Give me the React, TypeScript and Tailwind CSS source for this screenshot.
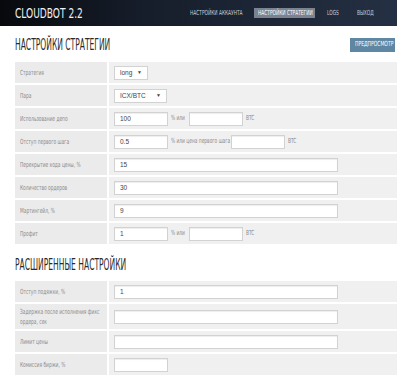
import React from "react"

const cond = "font-['DejaVu_Sans_Condensed','Open_Sans',sans-serif] font-stretch-condensed"

// narrow text: the reference uses a very condensed face, squeeze it horizontally
function N({ k, children }: { k: string; children: React.ReactNode }) {
  return <span className={`inline-block origin-left whitespace-nowrap ${k}`}>{children}</span>
}

function Input({ w = "w-[224px]", value = "" }: { w?: string; value?: string }) {
  return (
    <div
      className={`${w} shrink-0 h-[14px] bg-white border border-[#d2d2d2] shadow-[inset_0_1px_1px_rgba(0,0,0,0.07)] flex items-center px-[5px] text-[6.5px] text-[#444] font-['Liberation_Sans',sans-serif]`}
    >
      {value}
    </div>
  )
}

function Select({ w, value }: { w: string; value: string }) {
  return (
    <div
      className={`${w} shrink-0 h-[14px] bg-white border border-[#d2d2d2] flex items-center justify-between pl-[5px] pr-[5px] text-[6.5px] text-[#444] font-['Liberation_Sans',sans-serif]`}
    >
      <span>{value}</span>
      <span className="text-[5px]">▼</span>
    </div>
  )
}

function Unit({ w, children }: { w: string; children: React.ReactNode }) {
  return (
    <div className={`${w} shrink-0 pl-[3px] ${cond} text-[7px] text-[#8a8a8a]`}>
      <N k="scale-x-[0.69]">{children}</N>
    </div>
  )
}

function Row({ label, h = "h-[23px]", children }: { label: React.ReactNode; h?: string; children?: React.ReactNode }) {
  return (
    <div className={`flex ${h} border-b-2 border-white`}>
      <div className={`w-[94px] shrink-0 bg-[#ebebeb] border-r-2 border-white flex items-center px-[5px] ${cond} text-[7px] leading-[10px] text-[#8a8a8a]`}>
        {label}
      </div>
      <div className="flex-1 bg-[#f0f0f0] flex items-center pl-[5px]">{children}</div>
    </div>
  )
}

function Label({ children }: { children: React.ReactNode }) {
  return <N k="scale-x-[0.69]">{children}</N>
}

function Heading({ children }: { children: React.ReactNode }) {
  return (
    <h2 className={`${cond} text-[15px] leading-[20px] text-[#2a2a2a] uppercase`}>
      <N k="scale-x-[0.56]">{children}</N>
    </h2>
  )
}

export default function App() {
  return (
    <div className="w-[397px] h-[375px] overflow-hidden bg-white">
      <header className="h-[26px] flex items-center justify-between pl-[15px] pr-[23px] bg-[linear-gradient(90deg,#07090d_0%,#161d2a_35%,#243043_100%)]">
        <div className={`${cond} text-[14px] text-[#eef0f3]`}>
          <N k="scale-x-[0.72]">CLOUDBOT 2.2</N>
        </div>
        <nav className={`flex items-center ${cond} text-[7px] text-[#c9ced8]`}>
          <div className="w-[52px]">
            <N k="scale-x-[0.69]">НАСТРОЙКИ АККАУНТА</N>
          </div>
          <div className="w-[61px] h-[10px] ml-[12px] bg-[#7b8391] text-white flex items-center pl-[4px]">
            <N k="scale-x-[0.69]">НАСТРОЙКИ СТРАТЕГИИ</N>
          </div>
          <div className="w-[14px] ml-[12px]">
            <N k="scale-x-[0.69]">LOGS</N>
          </div>
          <div className="w-[17px] ml-[16px]">
            <N k="scale-x-[0.69]">ВЫХОД</N>
          </div>
        </nav>
      </header>

      <div className="pl-[15px]">
        <div className="flex items-center justify-between h-[36px] pt-[1px]">
          <Heading>Настройки стратегии</Heading>
          <button className={`w-[45px] h-[14px] bg-[#5f87a3] text-white ${cond} text-[7px] flex items-center pl-[5px] mr-[2px]`}>
            <N k="scale-x-[0.72]">ПРЕДПРОСМОТР</N>
          </button>
        </div>

        <div>
          <Row label={<Label>Стратегия</Label>}>
            <Select w="w-[34px]" value="long" />
          </Row>
          <Row label={<Label>Пара</Label>}>
            <Select w="w-[53px]" value="ICX/BTC" />
          </Row>
          <Row label={<Label>Использование депо</Label>}>
            <Input w="w-[54px]" value="100" />
            <Unit w="w-[21px]">% или</Unit>
            <Input w="w-[54px]" />
            <Unit w="w-[20px]">BTC</Unit>
          </Row>
          <Row label={<Label>Отступ первого шага</Label>}>
            <Input w="w-[54px]" value="0.5" />
            <Unit w="w-[63px]">% или цена первого шага</Unit>
            <Input w="w-[54px]" />
            <Unit w="w-[20px]">BTC</Unit>
          </Row>
          <Row label={<Label>Перекрытие хода цены, %</Label>}>
            <Input value="15" />
          </Row>
          <Row label={<Label>Количество ордеров</Label>}>
            <Input value="30" />
          </Row>
          <Row label={<Label>Мартингейл, %</Label>}>
            <Input value="9" />
          </Row>
          <Row label={<Label>Профит</Label>}>
            <Input w="w-[54px]" value="1" />
            <Unit w="w-[21px]">% или</Unit>
            <Input w="w-[54px]" />
            <Unit w="w-[20px]">BTC</Unit>
          </Row>
        </div>

        <div className="h-[35px] flex items-center pt-[3px]">
          <Heading>Расширенные настройки</Heading>
        </div>

        <div>
          <Row label={<Label>Отступ подяжки, %</Label>}>
            <Input value="1" />
          </Row>
          <Row
            h="h-[27px]"
            label={
              <div className="flex flex-col">
                <Label>Задержка после исполнения фикс</Label>
                <Label>ордера, сек</Label>
              </div>
            }
          >
            <Input />
          </Row>
          <Row label={<Label>Лимит цены</Label>}>
            <Input />
          </Row>
          <Row label={<Label>Комиссия биржи, %</Label>}>
            <Input w="w-[54px]" />
          </Row>
        </div>
      </div>
    </div>
  )
}
